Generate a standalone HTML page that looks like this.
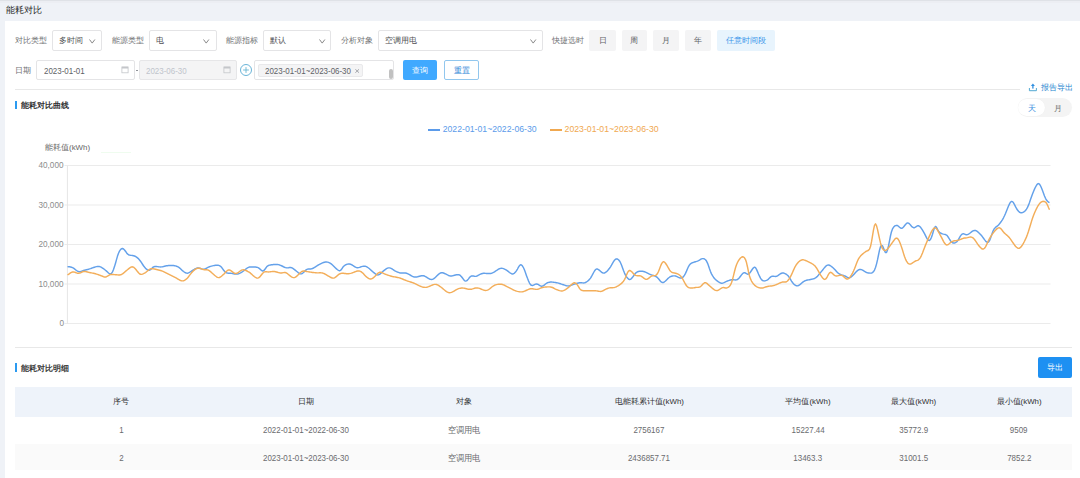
<!DOCTYPE html>
<html><head><meta charset="utf-8"><style>
html,body{margin:0;padding:0;}
body{width:1080px;height:478px;overflow:hidden;position:relative;background:#eff2f7;font-family:"Liberation Sans",sans-serif;}
.t{position:absolute;white-space:nowrap;font-size:7.9px;line-height:10px;}
.c{width:200px;text-align:center;}
.r{width:100px;text-align:right;}
</style></head><body>
<div style="position:absolute;left:0;top:0;width:1080px;height:1px;background:#dfe2e7;"></div><div style="position:absolute;left:0;top:1px;width:1080px;height:2px;background:#eceef3;"></div>
<div class="t" style="left:6.3px;top:4.5px;font-size:9px;color:#222;font-weight:500;">能耗对比</div>
<div style="position:absolute;left:5.2px;top:20.7px;width:1074.8px;height:458px;background:#fff;"></div>
<div class="t" style="left:15px;top:36px;color:#707174;">对比类型</div>
<div style="position:absolute;left:52px;top:30.3px;width:50px;height:20.3px;box-sizing:border-box;border:1px solid #e4e4e6;border-radius:2px;background:#fff;"></div>
<div class="t" style="left:59px;top:36px;color:#4e4f52;">多时间</div>
<svg style="position:absolute;left:89.0px;top:38.5px" width="7" height="5" viewBox="0 0 7 5"><path d="M0.5,0.5 L3.2,4.1 L5.9,0.5" fill="none" stroke="#888888" stroke-width="1"/></svg>
<div class="t" style="left:111.7px;top:36px;color:#707174;">能源类型</div>
<div style="position:absolute;left:148.6px;top:30.3px;width:68px;height:20.3px;box-sizing:border-box;border:1px solid #e4e4e6;border-radius:2px;background:#fff;"></div>
<div class="t" style="left:155.6px;top:36px;color:#4e4f52;">电</div>
<svg style="position:absolute;left:203.0px;top:38.5px" width="7" height="5" viewBox="0 0 7 5"><path d="M0.5,0.5 L3.2,4.1 L5.9,0.5" fill="none" stroke="#888888" stroke-width="1"/></svg>
<div class="t" style="left:225.9px;top:36px;color:#707174;">能源指标</div>
<div style="position:absolute;left:263.3px;top:30.3px;width:68px;height:20.3px;box-sizing:border-box;border:1px solid #e4e4e6;border-radius:2px;background:#fff;"></div>
<div class="t" style="left:270.3px;top:36px;color:#4e4f52;">默认</div>
<svg style="position:absolute;left:318.5px;top:38.5px" width="7" height="5" viewBox="0 0 7 5"><path d="M0.5,0.5 L3.2,4.1 L5.9,0.5" fill="none" stroke="#888888" stroke-width="1"/></svg>
<div class="t" style="left:340.7px;top:36px;color:#707174;">分析对象</div>
<div style="position:absolute;left:378.4px;top:30.3px;width:165px;height:20.3px;box-sizing:border-box;border:1px solid #e4e4e6;border-radius:2px;background:#fff;"></div>
<div class="t" style="left:385.4px;top:36px;color:#4e4f52;">空调用电</div>
<svg style="position:absolute;left:529.5px;top:38.5px" width="7" height="5" viewBox="0 0 7 5"><path d="M0.5,0.5 L3.2,4.1 L5.9,0.5" fill="none" stroke="#888888" stroke-width="1"/></svg>
<div class="t" style="left:551.7px;top:36px;color:#707174;">快捷选时</div>
<div style="position:absolute;left:589.4px;top:30px;width:26.7px;height:20.5px;background:#f4f4f5;border-radius:2px;"></div>
<div class="t c" style="left:502.75px;top:36px;color:#606266;">日</div>
<div style="position:absolute;left:621.7px;top:30px;width:25.5px;height:20.5px;background:#f4f4f5;border-radius:2px;"></div>
<div class="t c" style="left:534.45px;top:36px;color:#606266;">周</div>
<div style="position:absolute;left:652.8px;top:30px;width:26.6px;height:20.5px;background:#f4f4f5;border-radius:2px;"></div>
<div class="t c" style="left:566.0999999999999px;top:36px;color:#606266;">月</div>
<div style="position:absolute;left:685px;top:30px;width:26.2px;height:20.5px;background:#f4f4f5;border-radius:2px;"></div>
<div class="t c" style="left:598.1px;top:36px;color:#606266;">年</div>
<div style="position:absolute;left:716.5px;top:30px;width:58px;height:20.5px;background:#e8f4fd;border-radius:2px;"></div>
<div class="t c" style="left:645.5px;top:36px;color:#3a94ea;">任意时间段</div>
<div class="t" style="left:15.4px;top:65.6px;color:#707174;">日期</div>
<div style="position:absolute;left:36.3px;top:59.8px;width:98.7px;height:20.2px;box-sizing:border-box;border:1px solid #e4e4e6;border-radius:2px;background:#fff;"></div>
<div class="t" style="left:43.6px;top:65.5px;color:#606266;"><span style="display:inline-block;font-size:8.7px;transform:scaleX(0.915);transform-origin:left center;">2023-01-01</span></div>
<svg style="position:absolute;left:120.5px;top:65.8px" width="8" height="8" viewBox="0 0 8 8"><rect x="0.9" y="0.9" width="6.2" height="5.9" fill="none" stroke="#c4c6ca" stroke-width="0.8"/><rect x="0.9" y="0.9" width="6.2" height="1.6" fill="#c4c6ca"/></svg>
<div style="position:absolute;left:135.8px;top:70px;width:2px;height:0.8px;background:#909399;"></div>
<div style="position:absolute;left:138.8px;top:59.8px;width:98.2px;height:19.8px;box-sizing:border-box;border:1px solid #e6e6e8;border-radius:2px;background:#f4f4f5;"></div>
<div class="t" style="left:145.6px;top:65.5px;color:#c0c4cc;"><span style="display:inline-block;font-size:8.7px;transform:scaleX(0.915);transform-origin:left center;">2023-06-30</span></div>
<svg style="position:absolute;left:222.5px;top:65.8px" width="8" height="8" viewBox="0 0 8 8"><rect x="0.9" y="0.9" width="6.2" height="5.9" fill="none" stroke="#c4c6ca" stroke-width="0.8"/><rect x="0.9" y="0.9" width="6.2" height="1.6" fill="#c4c6ca"/></svg>
<svg style="position:absolute;left:239px;top:62.9px" width="14" height="14" viewBox="0 0 14 14"><circle cx="7" cy="7" r="5.5" fill="none" stroke="#62b0d6" stroke-width="0.95"/><line x1="4.1" y1="7" x2="9.9" y2="7" stroke="#6ab5d2" stroke-width="0.9"/><line x1="7" y1="4.1" x2="7" y2="9.9" stroke="#6ab5d2" stroke-width="0.9"/></svg>
<div style="position:absolute;left:254.4px;top:60.3px;width:139.2px;height:19.4px;box-sizing:border-box;border:1px solid #e4e4e6;border-radius:2px;background:#fff;"></div>
<div style="position:absolute;left:258.3px;top:64.4px;width:105px;height:12.5px;box-sizing:border-box;border:1px solid #e9e9eb;border-radius:2px;background:#f4f4f5;"></div>
<div class="t" style="left:264.6px;top:65.5px;color:#606266;"><span style="display:inline-block;font-size:8.7px;transform:scaleX(0.915);transform-origin:left center;">2023-01-01~2023-06-30</span></div>
<svg style="position:absolute;left:354.5px;top:69.2px" width="4.4" height="4" viewBox="0 0 4.4 4"><path d="M0.3,0.2 L4.1,3.8 M4.1,0.2 L0.3,3.8" stroke="#909399" stroke-width="0.8"/></svg>
<div style="position:absolute;left:389px;top:69px;width:4px;height:10px;background:#c1c1c1;border-radius:2px;"></div>
<div style="position:absolute;left:402.5px;top:59.6px;width:34.3px;height:20.6px;background:#40a9ff;border-radius:2px;"></div>
<div class="t c" style="left:319.65px;top:66px;color:#fff;font-weight:500;">查询</div>
<div style="position:absolute;left:444.2px;top:59.6px;width:34.7px;height:20.6px;box-sizing:border-box;border:1px solid #92c7ee;border-radius:2px;background:#fff;"></div>
<div class="t c" style="left:361.55px;top:66px;color:#2a82d6;font-weight:500;">重置</div>
<div style="position:absolute;left:15px;top:89px;width:1005px;height:1px;background:#e8e8e8;"></div>
<div style="position:absolute;left:15px;top:100.8px;width:2px;height:8.6px;background:#2b9af0;"></div>
<div class="t" style="left:21.3px;top:101px;font-weight:bold;color:#303133;">能耗对比曲线</div>
<svg style="position:absolute;left:1028px;top:83px" width="10" height="9" viewBox="0 0 10 9"><path d="M1.4,5.0 V7.7 H8.4 V5.0" fill="none" stroke="#4aa4d0" stroke-width="0.95"/><path d="M2.9,2.9 L4.9,0.6 L6.9,2.9 Z" fill="#2f8fe0"/><rect x="4.25" y="2.6" width="1.3" height="3.0" fill="#2f8fe0"/></svg>
<div class="t" style="left:1040.6px;top:83px;color:#2585cf;">报告导出</div>
<div style="position:absolute;left:1017.8px;top:98px;width:54px;height:18.7px;background:#f4f4f4;border-radius:9.5px;"></div>
<div style="position:absolute;left:1018.2px;top:99.3px;width:27px;height:16.7px;background:#fff;border-radius:8.5px;box-shadow:0 0 1px rgba(0,0,0,0.05);"></div>
<div class="t" style="left:1027.7px;top:104px;color:#3a8fe0;">天</div>
<div class="t" style="left:1054px;top:104px;color:#707070;">月</div>
<div style="position:absolute;left:428px;top:129.2px;width:12px;height:1.8px;background:#5b9bea;"></div>
<div class="t" style="left:442.7px;top:123.5px;color:#5b9bea;font-size:8.7px;">2022-01-01~2022-06-30</div>
<div style="position:absolute;left:550.4px;top:129.2px;width:12px;height:1.8px;background:#f0a850;"></div>
<div class="t" style="left:564.6px;top:123.5px;color:#f0a850;font-size:8.7px;">2023-01-01~2023-06-30</div>
<div style="position:absolute;left:100.6px;top:152px;width:30.4px;height:1px;background:#effcef;"></div>
<div class="t" style="left:45px;top:142.5px;color:#666;font-size:7.9px;">能耗值(kWh)</div>
<svg style="position:absolute;left:0;top:0" width="1080" height="478" viewBox="0 0 1080 478"><line x1="64.5" y1="165.5" x2="1050.5" y2="165.5" stroke="#ebebeb" stroke-width="1"/><line x1="64.5" y1="205.0" x2="1050.5" y2="205.0" stroke="#ebebeb" stroke-width="1"/><line x1="64.5" y1="244.5" x2="1050.5" y2="244.5" stroke="#ebebeb" stroke-width="1"/><line x1="64.5" y1="284.0" x2="1050.5" y2="284.0" stroke="#ebebeb" stroke-width="1"/><line x1="64.5" y1="323.5" x2="1050.5" y2="323.5" stroke="#ebebeb" stroke-width="1"/><line x1="67.4" y1="165.5" x2="67.4" y2="324" stroke="#e6e6e6" stroke-width="1"/><path d="M67.5,266.61 L68.5,266.70 L69.5,266.82 L70.5,266.98 L71.5,267.21 L72.5,267.56 L73.5,268.10 L74.5,268.83 L75.5,269.68 L76.5,270.52 L77.5,271.19 L78.5,271.59 L79.5,271.68 L80.5,271.52 L81.5,271.21 L82.5,270.85 L83.5,270.51 L84.5,270.22 L85.5,269.97 L86.5,269.73 L87.5,269.48 L88.5,269.22 L89.5,268.92 L90.5,268.60 L91.5,268.25 L92.5,267.89 L93.5,267.55 L94.5,267.22 L95.5,266.90 L96.5,266.60 L97.5,266.41 L98.5,266.38 L99.5,266.57 L100.5,266.94 L101.5,267.46 L102.5,268.07 L103.5,268.73 L104.5,269.45 L105.5,270.24 L106.5,271.11 L107.5,272.06 L108.5,273.03 L109.5,273.79 L110.5,273.98 L111.5,273.36 L112.5,271.88 L113.5,269.58 L114.5,266.60 L115.5,263.18 L116.5,259.58 L117.5,256.11 L118.5,253.21 L119.5,251.09 L120.5,249.64 L121.5,248.76 L122.5,248.52 L123.5,248.97 L124.5,249.95 L125.5,251.27 L126.5,252.70 L127.5,253.94 L128.5,254.74 L129.5,255.13 L130.5,255.27 L131.5,255.37 L132.5,255.52 L133.5,255.74 L134.5,256.04 L135.5,256.47 L136.5,257.07 L137.5,257.87 L138.5,258.84 L139.5,259.96 L140.5,261.24 L141.5,262.70 L142.5,264.25 L143.5,265.73 L144.5,267.04 L145.5,268.17 L146.5,269.15 L147.5,269.90 L148.5,270.31 L149.5,270.24 L150.5,269.63 L151.5,268.66 L152.5,267.67 L153.5,266.95 L154.5,266.57 L155.5,266.46 L156.5,266.52 L157.5,266.64 L158.5,266.78 L159.5,266.89 L160.5,266.93 L161.5,266.87 L162.5,266.72 L163.5,266.51 L164.5,266.27 L165.5,266.03 L166.5,265.82 L167.5,265.67 L168.5,265.55 L169.5,265.48 L170.5,265.43 L171.5,265.42 L172.5,265.44 L173.5,265.51 L174.5,265.66 L175.5,265.89 L176.5,266.22 L177.5,266.66 L178.5,267.22 L179.5,267.91 L180.5,268.76 L181.5,269.72 L182.5,270.67 L183.5,271.51 L184.5,272.22 L185.5,272.79 L186.5,273.13 L187.5,273.18 L188.5,272.91 L189.5,272.39 L190.5,271.75 L191.5,271.10 L192.5,270.47 L193.5,269.86 L194.5,269.26 L195.5,268.72 L196.5,268.30 L197.5,268.07 L198.5,268.06 L199.5,268.25 L200.5,268.55 L201.5,268.87 L202.5,269.11 L203.5,269.17 L204.5,269.03 L205.5,268.69 L206.5,268.22 L207.5,267.70 L208.5,267.19 L209.5,266.75 L210.5,266.40 L211.5,266.11 L212.5,265.86 L213.5,265.65 L214.5,265.46 L215.5,265.33 L216.5,265.24 L217.5,265.23 L218.5,265.33 L219.5,265.65 L220.5,266.28 L221.5,267.28 L222.5,268.59 L223.5,270.01 L224.5,271.27 L225.5,272.19 L226.5,272.75 L227.5,273.05 L228.5,273.18 L229.5,273.25 L230.5,273.30 L231.5,273.39 L232.5,273.56 L233.5,273.77 L234.5,273.98 L235.5,274.12 L236.5,274.15 L237.5,274.03 L238.5,273.76 L239.5,273.37 L240.5,272.89 L241.5,272.33 L242.5,271.70 L243.5,270.99 L244.5,270.18 L245.5,269.33 L246.5,268.52 L247.5,267.85 L248.5,267.36 L249.5,267.07 L250.5,266.93 L251.5,266.90 L252.5,266.92 L253.5,266.96 L254.5,266.99 L255.5,267.05 L256.5,267.17 L257.5,267.42 L258.5,267.89 L259.5,268.64 L260.5,269.58 L261.5,270.48 L262.5,271.00 L263.5,270.84 L264.5,269.89 L265.5,268.46 L266.5,267.06 L267.5,266.06 L268.5,265.47 L269.5,265.13 L270.5,264.93 L271.5,264.79 L272.5,264.67 L273.5,264.56 L274.5,264.47 L275.5,264.41 L276.5,264.41 L277.5,264.48 L278.5,264.65 L279.5,264.93 L280.5,265.32 L281.5,265.77 L282.5,266.27 L283.5,266.77 L284.5,267.23 L285.5,267.61 L286.5,267.84 L287.5,267.87 L288.5,267.72 L289.5,267.52 L290.5,267.47 L291.5,267.70 L292.5,268.20 L293.5,268.89 L294.5,269.66 L295.5,270.44 L296.5,271.23 L297.5,272.06 L298.5,272.87 L299.5,273.53 L300.5,273.90 L301.5,273.85 L302.5,273.33 L303.5,272.44 L304.5,271.38 L305.5,270.36 L306.5,269.59 L307.5,269.15 L308.5,268.99 L309.5,268.97 L310.5,268.95 L311.5,268.81 L312.5,268.50 L313.5,268.02 L314.5,267.43 L315.5,266.79 L316.5,266.14 L317.5,265.50 L318.5,264.92 L319.5,264.38 L320.5,263.87 L321.5,263.37 L322.5,262.92 L323.5,262.52 L324.5,262.22 L325.5,262.04 L326.5,262.00 L327.5,262.12 L328.5,262.42 L329.5,262.87 L330.5,263.46 L331.5,264.16 L332.5,264.99 L333.5,265.93 L334.5,266.92 L335.5,267.92 L336.5,268.88 L337.5,269.75 L338.5,270.42 L339.5,270.72 L340.5,270.39 L341.5,269.30 L342.5,267.79 L343.5,266.44 L344.5,265.53 L345.5,264.92 L346.5,264.46 L347.5,264.14 L348.5,263.98 L349.5,264.00 L350.5,264.25 L351.5,264.69 L352.5,265.25 L353.5,265.86 L354.5,266.52 L355.5,267.17 L356.5,267.63 L357.5,267.77 L358.5,267.64 L359.5,267.36 L360.5,267.02 L361.5,266.67 L362.5,266.37 L363.5,266.17 L364.5,266.13 L365.5,266.30 L366.5,266.70 L367.5,267.28 L368.5,267.99 L369.5,268.81 L370.5,269.70 L371.5,270.62 L372.5,271.51 L373.5,272.36 L374.5,273.18 L375.5,273.95 L376.5,274.57 L377.5,274.91 L378.5,274.86 L379.5,274.41 L380.5,273.65 L381.5,272.73 L382.5,271.78 L383.5,270.90 L384.5,270.11 L385.5,269.36 L386.5,268.69 L387.5,268.16 L388.5,267.87 L389.5,267.85 L390.5,268.11 L391.5,268.60 L392.5,269.23 L393.5,269.90 L394.5,270.54 L395.5,271.10 L396.5,271.59 L397.5,272.02 L398.5,272.42 L399.5,272.74 L400.5,272.97 L401.5,273.07 L402.5,273.02 L403.5,272.91 L404.5,272.85 L405.5,272.93 L406.5,273.22 L407.5,273.65 L408.5,274.18 L409.5,274.72 L410.5,275.26 L411.5,275.81 L412.5,276.34 L413.5,276.77 L414.5,277.02 L415.5,277.08 L416.5,276.98 L417.5,276.79 L418.5,276.53 L419.5,276.26 L420.5,275.99 L421.5,275.76 L422.5,275.64 L423.5,275.73 L424.5,276.06 L425.5,276.56 L426.5,277.16 L427.5,277.82 L428.5,278.47 L429.5,279.02 L430.5,279.40 L431.5,279.54 L432.5,279.37 L433.5,278.90 L434.5,278.18 L435.5,277.29 L436.5,276.32 L437.5,275.32 L438.5,274.37 L439.5,273.55 L440.5,272.96 L441.5,272.68 L442.5,272.73 L443.5,273.04 L444.5,273.47 L445.5,273.93 L446.5,274.43 L447.5,274.96 L448.5,275.45 L449.5,275.80 L450.5,275.97 L451.5,275.97 L452.5,275.81 L453.5,275.57 L454.5,275.29 L455.5,275.01 L456.5,274.78 L457.5,274.64 L458.5,274.67 L459.5,274.96 L460.5,275.63 L461.5,276.70 L462.5,278.05 L463.5,279.44 L464.5,280.55 L465.5,281.09 L466.5,280.91 L467.5,280.09 L468.5,278.86 L469.5,277.56 L470.5,276.51 L471.5,275.94 L472.5,275.85 L473.5,276.07 L474.5,276.32 L475.5,276.38 L476.5,276.17 L477.5,275.75 L478.5,275.23 L479.5,274.68 L480.5,274.17 L481.5,273.76 L482.5,273.47 L483.5,273.33 L484.5,273.30 L485.5,273.35 L486.5,273.44 L487.5,273.53 L488.5,273.59 L489.5,273.59 L490.5,273.49 L491.5,273.27 L492.5,272.90 L493.5,272.40 L494.5,271.81 L495.5,271.15 L496.5,270.48 L497.5,269.81 L498.5,269.21 L499.5,268.72 L500.5,268.39 L501.5,268.26 L502.5,268.35 L503.5,268.64 L504.5,269.08 L505.5,269.61 L506.5,270.21 L507.5,270.91 L508.5,271.69 L509.5,272.47 L510.5,273.17 L511.5,273.71 L512.5,273.95 L513.5,273.76 L514.5,273.12 L515.5,272.06 L516.5,270.68 L517.5,269.02 L518.5,267.14 L519.5,265.53 L520.5,264.75 L521.5,264.97 L522.5,266.02 L523.5,267.74 L524.5,270.05 L525.5,272.80 L526.5,275.65 L527.5,278.35 L528.5,280.86 L529.5,283.03 L530.5,284.59 L531.5,285.39 L532.5,285.48 L533.5,285.10 L534.5,284.55 L535.5,284.10 L536.5,283.94 L537.5,284.17 L538.5,284.71 L539.5,285.36 L540.5,285.92 L541.5,286.20 L542.5,286.09 L543.5,285.60 L544.5,284.85 L545.5,284.02 L546.5,283.27 L547.5,282.70 L548.5,282.34 L549.5,282.16 L550.5,282.09 L551.5,282.09 L552.5,282.15 L553.5,282.24 L554.5,282.36 L555.5,282.51 L556.5,282.68 L557.5,282.89 L558.5,283.16 L559.5,283.47 L560.5,283.80 L561.5,284.15 L562.5,284.47 L563.5,284.79 L564.5,285.11 L565.5,285.43 L566.5,285.71 L567.5,285.89 L568.5,285.93 L569.5,285.81 L570.5,285.54 L571.5,285.18 L572.5,284.80 L573.5,284.43 L574.5,284.10 L575.5,283.78 L576.5,283.48 L577.5,283.20 L578.5,282.95 L579.5,282.76 L580.5,282.68 L581.5,282.75 L582.5,282.89 L583.5,282.97 L584.5,282.86 L585.5,282.51 L586.5,281.97 L587.5,281.27 L588.5,280.41 L589.5,279.36 L590.5,278.07 L591.5,276.49 L592.5,274.67 L593.5,272.76 L594.5,271.00 L595.5,269.65 L596.5,268.98 L597.5,269.06 L598.5,269.65 L599.5,270.42 L600.5,271.28 L601.5,272.14 L602.5,272.81 L603.5,273.12 L604.5,272.99 L605.5,272.47 L606.5,271.68 L607.5,270.69 L608.5,269.55 L609.5,268.28 L610.5,266.80 L611.5,265.13 L612.5,263.37 L613.5,261.67 L614.5,260.23 L615.5,259.25 L616.5,258.85 L617.5,259.04 L618.5,259.77 L619.5,260.98 L620.5,262.68 L621.5,264.97 L622.5,267.74 L623.5,270.58 L624.5,273.07 L625.5,275.08 L626.5,276.74 L627.5,278.10 L628.5,279.10 L629.5,279.58 L630.5,279.37 L631.5,278.52 L632.5,277.33 L633.5,275.97 L634.5,274.55 L635.5,273.28 L636.5,272.36 L637.5,271.80 L638.5,271.48 L639.5,271.31 L640.5,271.25 L641.5,271.26 L642.5,271.34 L643.5,271.50 L644.5,271.76 L645.5,272.12 L646.5,272.55 L647.5,273.04 L648.5,273.55 L649.5,274.04 L650.5,274.48 L651.5,274.87 L652.5,275.21 L653.5,275.55 L654.5,275.90 L655.5,276.32 L656.5,276.87 L657.5,277.64 L658.5,278.70 L659.5,279.98 L660.5,281.24 L661.5,282.16 L662.5,282.56 L663.5,282.41 L664.5,281.81 L665.5,280.94 L666.5,279.93 L667.5,278.90 L668.5,277.97 L669.5,277.22 L670.5,276.66 L671.5,276.25 L672.5,275.98 L673.5,275.85 L674.5,275.87 L675.5,276.05 L676.5,276.39 L677.5,276.85 L678.5,277.34 L679.5,277.78 L680.5,278.07 L681.5,278.05 L682.5,277.60 L683.5,276.62 L684.5,275.17 L685.5,273.34 L686.5,271.15 L687.5,268.73 L688.5,266.53 L689.5,264.91 L690.5,263.86 L691.5,263.18 L692.5,262.70 L693.5,262.32 L694.5,262.00 L695.5,261.71 L696.5,261.41 L697.5,261.06 L698.5,260.63 L699.5,260.08 L700.5,259.47 L701.5,258.93 L702.5,258.62 L703.5,258.64 L704.5,259.01 L705.5,259.77 L706.5,261.06 L707.5,263.06 L708.5,265.81 L709.5,268.85 L710.5,271.61 L711.5,273.87 L712.5,275.71 L713.5,277.21 L714.5,278.44 L715.5,279.47 L716.5,280.38 L717.5,281.18 L718.5,281.89 L719.5,282.49 L720.5,282.94 L721.5,283.18 L722.5,283.16 L723.5,282.89 L724.5,282.42 L725.5,281.90 L726.5,281.42 L727.5,281.01 L728.5,280.65 L729.5,280.32 L730.5,280.03 L731.5,279.81 L732.5,279.70 L733.5,279.74 L734.5,279.87 L735.5,279.97 L736.5,279.89 L737.5,279.48 L738.5,278.68 L739.5,277.55 L740.5,276.23 L741.5,274.88 L742.5,273.70 L743.5,272.90 L744.5,272.68 L745.5,273.05 L746.5,273.71 L747.5,274.18 L748.5,274.07 L749.5,273.29 L750.5,272.01 L751.5,270.51 L752.5,269.00 L753.5,267.78 L754.5,267.20 L755.5,267.70 L756.5,269.35 L757.5,271.66 L758.5,274.00 L759.5,276.19 L760.5,278.13 L761.5,279.62 L762.5,280.52 L763.5,280.89 L764.5,280.91 L765.5,280.69 L766.5,280.33 L767.5,279.81 L768.5,279.06 L769.5,278.09 L770.5,277.12 L771.5,276.42 L772.5,276.15 L773.5,276.22 L774.5,276.39 L775.5,276.47 L776.5,276.29 L777.5,275.84 L778.5,275.17 L779.5,274.44 L780.5,273.75 L781.5,273.24 L782.5,272.99 L783.5,273.03 L784.5,273.33 L785.5,273.82 L786.5,274.48 L787.5,275.31 L788.5,276.35 L789.5,277.71 L790.5,279.36 L791.5,281.04 L792.5,282.50 L793.5,283.69 L794.5,284.66 L795.5,285.39 L796.5,285.81 L797.5,285.87 L798.5,285.56 L799.5,284.94 L800.5,284.13 L801.5,283.24 L802.5,282.38 L803.5,281.62 L804.5,281.03 L805.5,280.61 L806.5,280.30 L807.5,280.07 L808.5,279.88 L809.5,279.69 L810.5,279.48 L811.5,279.26 L812.5,279.05 L813.5,278.80 L814.5,278.46 L815.5,277.91 L816.5,277.14 L817.5,276.16 L818.5,275.03 L819.5,273.82 L820.5,272.60 L821.5,271.39 L822.5,270.18 L823.5,268.92 L824.5,267.67 L825.5,266.54 L826.5,265.65 L827.5,265.12 L828.5,264.99 L829.5,265.24 L830.5,265.77 L831.5,266.49 L832.5,267.32 L833.5,268.21 L834.5,269.20 L835.5,270.32 L836.5,271.48 L837.5,272.53 L838.5,273.37 L839.5,274.00 L840.5,274.48 L841.5,274.86 L842.5,275.19 L843.5,275.50 L844.5,275.83 L845.5,276.25 L846.5,276.80 L847.5,277.37 L848.5,277.75 L849.5,277.76 L850.5,277.39 L851.5,276.70 L852.5,275.78 L853.5,274.74 L854.5,273.65 L855.5,272.57 L856.5,271.55 L857.5,270.66 L858.5,269.96 L859.5,269.52 L860.5,269.41 L861.5,269.61 L862.5,270.06 L863.5,270.68 L864.5,271.36 L865.5,271.98 L866.5,272.45 L867.5,272.76 L868.5,272.96 L869.5,273.09 L870.5,273.13 L871.5,272.99 L872.5,272.56 L873.5,271.66 L874.5,270.03 L875.5,267.51 L876.5,264.10 L877.5,259.90 L878.5,255.01 L879.5,250.18 L880.5,246.77 L881.5,245.39 L882.5,245.93 L883.5,247.98 L884.5,250.68 L885.5,252.61 L886.5,252.51 L887.5,250.06 L888.5,245.89 L889.5,240.81 L890.5,235.74 L891.5,231.67 L892.5,228.95 L893.5,227.27 L894.5,226.22 L895.5,225.59 L896.5,225.34 L897.5,225.56 L898.5,226.27 L899.5,227.23 L900.5,228.05 L901.5,228.36 L902.5,228.00 L903.5,227.05 L904.5,225.78 L905.5,224.48 L906.5,223.46 L907.5,222.97 L908.5,223.14 L909.5,223.88 L910.5,224.99 L911.5,226.18 L912.5,227.18 L913.5,227.72 L914.5,227.66 L915.5,227.11 L916.5,226.36 L917.5,225.80 L918.5,225.75 L919.5,226.28 L920.5,227.29 L921.5,228.63 L922.5,230.15 L923.5,231.81 L924.5,233.64 L925.5,235.64 L926.5,237.64 L927.5,239.34 L928.5,240.38 L929.5,240.42 L930.5,239.37 L931.5,237.29 L932.5,234.30 L933.5,230.72 L934.5,227.66 L935.5,226.40 L936.5,227.27 L937.5,229.29 L938.5,231.16 L939.5,232.34 L940.5,233.03 L941.5,233.50 L942.5,233.87 L943.5,234.16 L944.5,234.35 L945.5,234.55 L946.5,235.05 L947.5,236.07 L948.5,237.53 L949.5,239.19 L950.5,240.74 L951.5,241.96 L952.5,242.72 L953.5,243.04 L954.5,243.01 L955.5,242.66 L956.5,241.99 L957.5,240.91 L958.5,239.39 L959.5,237.61 L960.5,235.89 L961.5,234.57 L962.5,233.88 L963.5,233.81 L964.5,234.12 L965.5,234.51 L966.5,234.72 L967.5,234.61 L968.5,234.16 L969.5,233.49 L970.5,232.71 L971.5,231.92 L972.5,231.21 L973.5,230.69 L974.5,230.45 L975.5,230.54 L976.5,230.94 L977.5,231.61 L978.5,232.48 L979.5,233.44 L980.5,234.46 L981.5,235.57 L982.5,236.83 L983.5,238.23 L984.5,239.64 L985.5,240.93 L986.5,241.92 L987.5,242.39 L988.5,242.05 L989.5,240.67 L990.5,238.30 L991.5,235.33 L992.5,232.40 L993.5,230.06 L994.5,228.47 L995.5,227.42 L996.5,226.63 L997.5,225.86 L998.5,224.93 L999.5,223.81 L1000.5,222.54 L1001.5,221.13 L1002.5,219.56 L1003.5,217.78 L1004.5,215.75 L1005.5,213.44 L1006.5,210.93 L1007.5,208.40 L1008.5,205.98 L1009.5,203.85 L1010.5,202.24 L1011.5,201.43 L1012.5,201.62 L1013.5,202.79 L1014.5,204.62 L1015.5,206.67 L1016.5,208.51 L1017.5,210.04 L1018.5,211.31 L1019.5,212.22 L1020.5,212.67 L1021.5,212.72 L1022.5,212.51 L1023.5,212.09 L1024.5,211.43 L1025.5,210.48 L1026.5,209.18 L1027.5,207.41 L1028.5,205.15 L1029.5,202.49 L1030.5,199.61 L1031.5,196.71 L1032.5,193.97 L1033.5,191.46 L1034.5,189.16 L1035.5,187.05 L1036.5,185.25 L1037.5,183.99 L1038.5,183.56 L1039.5,184.17 L1040.5,185.77 L1041.5,188.03 L1042.5,190.57 L1043.5,193.24 L1044.5,195.94 L1045.5,198.30 L1046.5,200.04 L1047.5,201.25 L1048.5,202.12 L1049.5,202.71" fill="none" stroke="#64a1ea" stroke-width="1.45" stroke-linejoin="round"/><path d="M67.5,274.86 L68.5,274.33 L69.5,273.63 L70.5,272.95 L71.5,272.37 L72.5,271.99 L73.5,271.90 L74.5,272.09 L75.5,272.48 L76.5,272.92 L77.5,273.24 L78.5,273.33 L79.5,273.14 L80.5,272.74 L81.5,272.26 L82.5,271.80 L83.5,271.50 L84.5,271.40 L85.5,271.48 L86.5,271.68 L87.5,271.94 L88.5,272.21 L89.5,272.45 L90.5,272.67 L91.5,272.88 L92.5,273.09 L93.5,273.32 L94.5,273.56 L95.5,273.82 L96.5,274.11 L97.5,274.42 L98.5,274.75 L99.5,275.09 L100.5,275.45 L101.5,275.84 L102.5,276.27 L103.5,276.68 L104.5,276.97 L105.5,277.00 L106.5,276.72 L107.5,276.17 L108.5,275.51 L109.5,274.93 L110.5,274.55 L111.5,274.40 L112.5,274.40 L113.5,274.49 L114.5,274.60 L115.5,274.70 L116.5,274.79 L117.5,274.89 L118.5,274.98 L119.5,274.98 L120.5,274.84 L121.5,274.48 L122.5,273.91 L123.5,273.15 L124.5,272.28 L125.5,271.40 L126.5,270.54 L127.5,269.72 L128.5,268.90 L129.5,268.11 L130.5,267.42 L131.5,266.94 L132.5,266.82 L133.5,267.18 L134.5,267.98 L135.5,269.05 L136.5,270.27 L137.5,271.58 L138.5,272.81 L139.5,273.75 L140.5,274.27 L141.5,274.37 L142.5,274.13 L143.5,273.69 L144.5,273.14 L145.5,272.52 L146.5,271.81 L147.5,270.99 L148.5,270.14 L149.5,269.40 L150.5,268.90 L151.5,268.68 L152.5,268.69 L153.5,268.84 L154.5,269.06 L155.5,269.28 L156.5,269.50 L157.5,269.71 L158.5,269.94 L159.5,270.20 L160.5,270.48 L161.5,270.81 L162.5,271.18 L163.5,271.60 L164.5,272.07 L165.5,272.58 L166.5,273.10 L167.5,273.64 L168.5,274.16 L169.5,274.67 L170.5,275.17 L171.5,275.67 L172.5,276.17 L173.5,276.67 L174.5,277.17 L175.5,277.69 L176.5,278.23 L177.5,278.81 L178.5,279.41 L179.5,279.99 L180.5,280.47 L181.5,280.78 L182.5,280.88 L183.5,280.74 L184.5,280.35 L185.5,279.74 L186.5,278.93 L187.5,277.93 L188.5,276.73 L189.5,275.42 L190.5,274.09 L191.5,272.86 L192.5,271.75 L193.5,270.77 L194.5,269.88 L195.5,269.14 L196.5,268.57 L197.5,268.23 L198.5,268.14 L199.5,268.27 L200.5,268.55 L201.5,268.91 L202.5,269.27 L203.5,269.55 L204.5,269.70 L205.5,269.74 L206.5,269.76 L207.5,269.89 L208.5,270.23 L209.5,270.83 L210.5,271.61 L211.5,272.50 L212.5,273.43 L213.5,274.32 L214.5,275.18 L215.5,276.02 L216.5,276.79 L217.5,277.37 L218.5,277.62 L219.5,277.48 L220.5,276.97 L221.5,276.21 L222.5,275.33 L223.5,274.40 L224.5,273.39 L225.5,272.30 L226.5,271.27 L227.5,270.46 L228.5,270.01 L229.5,270.00 L230.5,270.41 L231.5,271.09 L232.5,271.90 L233.5,272.67 L234.5,273.25 L235.5,273.53 L236.5,273.44 L237.5,272.99 L238.5,272.30 L239.5,271.51 L240.5,270.76 L241.5,270.17 L242.5,269.86 L243.5,269.82 L244.5,269.99 L245.5,270.32 L246.5,270.75 L247.5,271.26 L248.5,271.82 L249.5,272.45 L250.5,273.20 L251.5,274.09 L252.5,275.05 L253.5,275.94 L254.5,276.73 L255.5,277.43 L256.5,277.96 L257.5,278.16 L258.5,277.91 L259.5,277.17 L260.5,276.04 L261.5,274.73 L262.5,273.47 L263.5,272.49 L264.5,271.91 L265.5,271.70 L266.5,271.75 L267.5,271.87 L268.5,271.93 L269.5,271.88 L270.5,271.75 L271.5,271.61 L272.5,271.51 L273.5,271.49 L274.5,271.58 L275.5,271.76 L276.5,272.01 L277.5,272.29 L278.5,272.58 L279.5,272.82 L280.5,272.98 L281.5,272.99 L282.5,272.84 L283.5,272.62 L284.5,272.47 L285.5,272.58 L286.5,273.01 L287.5,273.71 L288.5,274.54 L289.5,275.38 L290.5,276.14 L291.5,276.80 L292.5,277.34 L293.5,277.65 L294.5,277.61 L295.5,277.16 L296.5,276.38 L297.5,275.44 L298.5,274.46 L299.5,273.45 L300.5,272.49 L301.5,271.71 L302.5,271.24 L303.5,271.06 L304.5,271.09 L305.5,271.23 L306.5,271.42 L307.5,271.64 L308.5,271.84 L309.5,272.00 L310.5,272.15 L311.5,272.28 L312.5,272.41 L313.5,272.54 L314.5,272.65 L315.5,272.75 L316.5,272.82 L317.5,272.85 L318.5,272.85 L319.5,272.84 L320.5,272.84 L321.5,272.90 L322.5,273.05 L323.5,273.33 L324.5,273.76 L325.5,274.31 L326.5,274.92 L327.5,275.53 L328.5,276.12 L329.5,276.69 L330.5,277.26 L331.5,277.77 L332.5,278.09 L333.5,278.14 L334.5,277.85 L335.5,277.23 L336.5,276.39 L337.5,275.48 L338.5,274.64 L339.5,273.97 L340.5,273.55 L341.5,273.34 L342.5,273.29 L343.5,273.34 L344.5,273.45 L345.5,273.57 L346.5,273.68 L347.5,273.73 L348.5,273.70 L349.5,273.59 L350.5,273.41 L351.5,273.15 L352.5,272.81 L353.5,272.42 L354.5,272.00 L355.5,271.61 L356.5,271.29 L357.5,271.07 L358.5,270.99 L359.5,271.09 L360.5,271.42 L361.5,272.00 L362.5,272.83 L363.5,273.82 L364.5,274.89 L365.5,275.93 L366.5,276.89 L367.5,277.71 L368.5,278.38 L369.5,278.86 L370.5,279.04 L371.5,278.88 L372.5,278.39 L373.5,277.67 L374.5,276.81 L375.5,275.83 L376.5,274.74 L377.5,273.66 L378.5,272.79 L379.5,272.28 L380.5,272.17 L381.5,272.39 L382.5,272.81 L383.5,273.32 L384.5,273.84 L385.5,274.29 L386.5,274.68 L387.5,275.02 L388.5,275.34 L389.5,275.64 L390.5,275.93 L391.5,276.20 L392.5,276.46 L393.5,276.68 L394.5,276.88 L395.5,277.05 L396.5,277.23 L397.5,277.42 L398.5,277.64 L399.5,277.92 L400.5,278.25 L401.5,278.63 L402.5,279.04 L403.5,279.47 L404.5,279.89 L405.5,280.29 L406.5,280.67 L407.5,281.02 L408.5,281.34 L409.5,281.66 L410.5,281.98 L411.5,282.30 L412.5,282.63 L413.5,282.99 L414.5,283.39 L415.5,283.84 L416.5,284.36 L417.5,284.90 L418.5,285.42 L419.5,285.87 L420.5,286.26 L421.5,286.63 L422.5,286.95 L423.5,287.19 L424.5,287.34 L425.5,287.36 L426.5,287.25 L427.5,287.00 L428.5,286.65 L429.5,286.24 L430.5,285.80 L431.5,285.36 L432.5,284.96 L433.5,284.62 L434.5,284.40 L435.5,284.35 L436.5,284.51 L437.5,284.89 L438.5,285.45 L439.5,286.10 L440.5,286.78 L441.5,287.52 L442.5,288.33 L443.5,289.18 L444.5,290.03 L445.5,290.83 L446.5,291.54 L447.5,292.12 L448.5,292.53 L449.5,292.70 L450.5,292.64 L451.5,292.38 L452.5,291.95 L453.5,291.42 L454.5,290.81 L455.5,290.19 L456.5,289.59 L457.5,289.07 L458.5,288.67 L459.5,288.37 L460.5,288.17 L461.5,288.07 L462.5,288.05 L463.5,288.10 L464.5,288.23 L465.5,288.44 L466.5,288.70 L467.5,288.96 L468.5,289.18 L469.5,289.31 L470.5,289.32 L471.5,289.18 L472.5,288.91 L473.5,288.56 L474.5,288.23 L475.5,287.98 L476.5,287.87 L477.5,287.92 L478.5,288.11 L479.5,288.42 L480.5,288.80 L481.5,289.21 L482.5,289.61 L483.5,289.97 L484.5,290.25 L485.5,290.41 L486.5,290.40 L487.5,290.16 L488.5,289.69 L489.5,289.00 L490.5,288.18 L491.5,287.31 L492.5,286.48 L493.5,285.79 L494.5,285.27 L495.5,284.89 L496.5,284.60 L497.5,284.39 L498.5,284.25 L499.5,284.18 L500.5,284.19 L501.5,284.29 L502.5,284.50 L503.5,284.83 L504.5,285.27 L505.5,285.78 L506.5,286.33 L507.5,286.88 L508.5,287.40 L509.5,287.91 L510.5,288.43 L511.5,288.96 L512.5,289.48 L513.5,289.96 L514.5,290.39 L515.5,290.77 L516.5,291.10 L517.5,291.39 L518.5,291.64 L519.5,291.81 L520.5,291.90 L521.5,291.89 L522.5,291.76 L523.5,291.51 L524.5,291.15 L525.5,290.72 L526.5,290.26 L527.5,289.80 L528.5,289.38 L529.5,289.03 L530.5,288.81 L531.5,288.74 L532.5,288.79 L533.5,288.93 L534.5,289.12 L535.5,289.28 L536.5,289.36 L537.5,289.28 L538.5,289.02 L539.5,288.63 L540.5,288.18 L541.5,287.77 L542.5,287.47 L543.5,287.27 L544.5,287.12 L545.5,287.01 L546.5,286.93 L547.5,286.87 L548.5,286.86 L549.5,286.89 L550.5,286.99 L551.5,287.19 L552.5,287.53 L553.5,288.00 L554.5,288.53 L555.5,289.04 L556.5,289.49 L557.5,289.90 L558.5,290.30 L559.5,290.64 L560.5,290.89 L561.5,291.00 L562.5,290.92 L563.5,290.64 L564.5,290.17 L565.5,289.57 L566.5,288.88 L567.5,288.14 L568.5,287.36 L569.5,286.50 L570.5,285.56 L571.5,284.59 L572.5,283.70 L573.5,283.05 L574.5,282.81 L575.5,283.08 L576.5,283.87 L577.5,285.12 L578.5,286.74 L579.5,288.38 L580.5,289.59 L581.5,290.27 L582.5,290.59 L583.5,290.73 L584.5,290.77 L585.5,290.77 L586.5,290.77 L587.5,290.78 L588.5,290.80 L589.5,290.81 L590.5,290.80 L591.5,290.79 L592.5,290.77 L593.5,290.76 L594.5,290.76 L595.5,290.80 L596.5,290.89 L597.5,291.03 L598.5,291.20 L599.5,291.35 L600.5,291.41 L601.5,291.29 L602.5,290.97 L603.5,290.49 L604.5,289.95 L605.5,289.43 L606.5,288.95 L607.5,288.51 L608.5,288.13 L609.5,287.87 L610.5,287.73 L611.5,287.68 L612.5,287.66 L613.5,287.60 L614.5,287.43 L615.5,287.13 L616.5,286.71 L617.5,286.19 L618.5,285.59 L619.5,284.91 L620.5,284.17 L621.5,283.35 L622.5,282.40 L623.5,281.21 L624.5,279.60 L625.5,277.50 L626.5,275.06 L627.5,272.74 L628.5,271.10 L629.5,270.48 L630.5,270.77 L631.5,271.58 L632.5,272.61 L633.5,273.72 L634.5,274.71 L635.5,275.36 L636.5,275.64 L637.5,275.68 L638.5,275.65 L639.5,275.67 L640.5,275.87 L641.5,276.33 L642.5,277.05 L643.5,277.90 L644.5,278.68 L645.5,279.22 L646.5,279.35 L647.5,279.05 L648.5,278.40 L649.5,277.57 L650.5,276.75 L651.5,276.11 L652.5,275.76 L653.5,275.65 L654.5,275.62 L655.5,275.42 L656.5,274.78 L657.5,273.50 L658.5,271.49 L659.5,268.97 L660.5,266.29 L661.5,263.90 L662.5,262.27 L663.5,261.68 L664.5,262.11 L665.5,263.25 L666.5,264.73 L667.5,266.41 L668.5,268.23 L669.5,269.93 L670.5,271.22 L671.5,272.03 L672.5,272.51 L673.5,272.81 L674.5,273.02 L675.5,273.21 L676.5,273.46 L677.5,273.82 L678.5,274.32 L679.5,275.00 L680.5,275.92 L681.5,277.15 L682.5,278.71 L683.5,280.52 L684.5,282.44 L685.5,284.24 L686.5,285.75 L687.5,286.83 L688.5,287.50 L689.5,287.85 L690.5,288.00 L691.5,288.04 L692.5,288.02 L693.5,287.90 L694.5,287.67 L695.5,287.48 L696.5,287.40 L697.5,287.39 L698.5,287.33 L699.5,287.10 L700.5,286.56 L701.5,285.68 L702.5,284.57 L703.5,283.52 L704.5,282.83 L705.5,282.70 L706.5,283.12 L707.5,283.93 L708.5,284.87 L709.5,285.78 L710.5,286.64 L711.5,287.49 L712.5,288.34 L713.5,289.14 L714.5,289.83 L715.5,290.34 L716.5,290.59 L717.5,290.50 L718.5,290.11 L719.5,289.49 L720.5,288.78 L721.5,288.10 L722.5,287.65 L723.5,287.53 L724.5,287.71 L725.5,287.94 L726.5,287.95 L727.5,287.67 L728.5,287.12 L729.5,286.27 L730.5,284.90 L731.5,282.75 L732.5,279.61 L733.5,275.66 L734.5,271.49 L735.5,267.74 L736.5,264.77 L737.5,262.50 L738.5,260.70 L739.5,259.23 L740.5,258.05 L741.5,257.20 L742.5,256.77 L743.5,256.93 L744.5,257.82 L745.5,259.60 L746.5,262.58 L747.5,266.98 L748.5,271.95 L749.5,276.04 L750.5,278.92 L751.5,281.03 L752.5,282.68 L753.5,284.01 L754.5,285.07 L755.5,285.91 L756.5,286.56 L757.5,287.08 L758.5,287.48 L759.5,287.77 L760.5,287.96 L761.5,288.01 L762.5,287.92 L763.5,287.70 L764.5,287.39 L765.5,287.06 L766.5,286.74 L767.5,286.48 L768.5,286.29 L769.5,286.15 L770.5,286.03 L771.5,285.91 L772.5,285.75 L773.5,285.54 L774.5,285.26 L775.5,284.92 L776.5,284.52 L777.5,284.08 L778.5,283.63 L779.5,283.17 L780.5,282.73 L781.5,282.34 L782.5,282.05 L783.5,281.93 L784.5,281.98 L785.5,282.02 L786.5,281.73 L787.5,280.99 L788.5,279.83 L789.5,278.35 L790.5,276.62 L791.5,274.65 L792.5,272.44 L793.5,270.13 L794.5,267.93 L795.5,266.02 L796.5,264.45 L797.5,263.15 L798.5,262.07 L799.5,261.19 L800.5,260.50 L801.5,260.04 L802.5,259.81 L803.5,259.84 L804.5,260.08 L805.5,260.48 L806.5,260.94 L807.5,261.43 L808.5,261.90 L809.5,262.37 L810.5,262.87 L811.5,263.40 L812.5,264.00 L813.5,264.69 L814.5,265.52 L815.5,266.59 L816.5,267.97 L817.5,269.64 L818.5,271.46 L819.5,273.23 L820.5,274.85 L821.5,276.38 L822.5,277.78 L823.5,278.88 L824.5,279.42 L825.5,279.17 L826.5,278.04 L827.5,276.28 L828.5,274.39 L829.5,272.94 L830.5,272.32 L831.5,272.59 L832.5,273.47 L833.5,274.54 L834.5,275.41 L835.5,275.89 L836.5,275.99 L837.5,275.85 L838.5,275.62 L839.5,275.38 L840.5,275.24 L841.5,275.30 L842.5,275.68 L843.5,276.40 L844.5,277.35 L845.5,278.28 L846.5,278.93 L847.5,279.09 L848.5,278.68 L849.5,277.76 L850.5,276.44 L851.5,274.85 L852.5,273.05 L853.5,271.06 L854.5,268.78 L855.5,266.18 L856.5,263.48 L857.5,260.99 L858.5,258.94 L859.5,257.35 L860.5,256.09 L861.5,255.04 L862.5,254.12 L863.5,253.27 L864.5,252.47 L865.5,251.75 L866.5,251.19 L867.5,250.77 L868.5,250.26 L869.5,249.14 L870.5,246.60 L871.5,241.97 L872.5,235.85 L873.5,229.85 L874.5,225.40 L875.5,223.85 L876.5,225.57 L877.5,229.42 L878.5,233.99 L879.5,238.65 L880.5,242.96 L881.5,246.38 L882.5,248.64 L883.5,249.91 L884.5,250.44 L885.5,250.40 L886.5,249.89 L887.5,248.99 L888.5,247.82 L889.5,246.50 L890.5,245.13 L891.5,243.78 L892.5,242.40 L893.5,240.97 L894.5,239.59 L895.5,238.52 L896.5,238.08 L897.5,238.48 L898.5,239.73 L899.5,241.69 L900.5,244.12 L901.5,246.92 L902.5,250.09 L903.5,253.41 L904.5,256.50 L905.5,259.10 L906.5,261.17 L907.5,262.72 L908.5,263.70 L909.5,264.12 L910.5,264.05 L911.5,263.61 L912.5,262.96 L913.5,262.23 L914.5,261.54 L915.5,260.99 L916.5,260.63 L917.5,260.32 L918.5,259.81 L919.5,258.84 L920.5,257.33 L921.5,255.31 L922.5,252.92 L923.5,250.33 L924.5,247.69 L925.5,245.13 L926.5,242.71 L927.5,240.39 L928.5,238.11 L929.5,235.86 L930.5,233.68 L931.5,231.67 L932.5,229.95 L933.5,228.65 L934.5,227.94 L935.5,227.97 L936.5,228.75 L937.5,230.14 L938.5,231.90 L939.5,233.74 L940.5,235.56 L941.5,237.42 L942.5,239.40 L943.5,241.35 L944.5,243.06 L945.5,244.30 L946.5,244.91 L947.5,244.87 L948.5,244.31 L949.5,243.46 L950.5,242.57 L951.5,241.84 L952.5,241.35 L953.5,241.04 L954.5,240.83 L955.5,240.67 L956.5,240.52 L957.5,240.34 L958.5,240.11 L959.5,239.80 L960.5,239.42 L961.5,239.00 L962.5,238.58 L963.5,238.25 L964.5,238.05 L965.5,237.98 L966.5,237.87 L967.5,237.66 L968.5,237.38 L969.5,237.14 L970.5,237.02 L971.5,237.12 L972.5,237.55 L973.5,238.36 L974.5,239.52 L975.5,240.93 L976.5,242.44 L977.5,243.91 L978.5,245.25 L979.5,246.46 L980.5,247.58 L981.5,248.51 L982.5,249.06 L983.5,249.02 L984.5,248.27 L985.5,246.84 L986.5,244.89 L987.5,242.70 L988.5,240.52 L989.5,238.54 L990.5,236.83 L991.5,235.32 L992.5,233.91 L993.5,232.58 L994.5,231.33 L995.5,230.18 L996.5,229.17 L997.5,228.36 L998.5,227.86 L999.5,227.82 L1000.5,228.35 L1001.5,229.41 L1002.5,230.76 L1003.5,232.08 L1004.5,233.15 L1005.5,234.03 L1006.5,234.85 L1007.5,235.71 L1008.5,236.70 L1009.5,237.85 L1010.5,239.16 L1011.5,240.58 L1012.5,242.06 L1013.5,243.53 L1014.5,244.93 L1015.5,246.21 L1016.5,247.27 L1017.5,248.04 L1018.5,248.39 L1019.5,248.18 L1020.5,247.42 L1021.5,246.26 L1022.5,244.82 L1023.5,243.14 L1024.5,241.26 L1025.5,239.19 L1026.5,236.88 L1027.5,234.26 L1028.5,231.29 L1029.5,228.04 L1030.5,224.67 L1031.5,221.36 L1032.5,218.28 L1033.5,215.50 L1034.5,213.00 L1035.5,210.72 L1036.5,208.62 L1037.5,206.72 L1038.5,205.06 L1039.5,203.67 L1040.5,202.60 L1041.5,201.88 L1042.5,201.47 L1043.5,201.34 L1044.5,201.51 L1045.5,202.08 L1046.5,203.23 L1047.5,205.08 L1048.5,207.51 L1049.5,209.71" fill="none" stroke="#f3ae5a" stroke-width="1.45" stroke-linejoin="round"/></svg>
<div class="t r" style="left:-36.2px;top:160.2px;color:#8c8c8c;"><span style="display:inline-block;font-size:9.0px;transform:scaleX(0.91);transform-origin:right center;">40,000</span></div>
<div class="t r" style="left:-36.2px;top:199.7px;color:#8c8c8c;"><span style="display:inline-block;font-size:9.0px;transform:scaleX(0.91);transform-origin:right center;">30,000</span></div>
<div class="t r" style="left:-36.2px;top:239.2px;color:#8c8c8c;"><span style="display:inline-block;font-size:9.0px;transform:scaleX(0.91);transform-origin:right center;">20,000</span></div>
<div class="t r" style="left:-36.2px;top:278.7px;color:#8c8c8c;"><span style="display:inline-block;font-size:9.0px;transform:scaleX(0.91);transform-origin:right center;">10,000</span></div>
<div class="t r" style="left:-36.2px;top:318.2px;color:#8c8c8c;"><span style="display:inline-block;font-size:9.0px;transform:scaleX(0.91);transform-origin:right center;">0</span></div>
<div style="position:absolute;left:15px;top:347px;width:1057px;height:1px;background:#e8e8e8;"></div>
<div style="position:absolute;left:15px;top:363.1px;width:2px;height:8.7px;background:#2b9af0;"></div>
<div class="t" style="left:21.1px;top:363.5px;font-weight:bold;color:#3a3a3a;">能耗对比明细</div>
<div style="position:absolute;left:1038px;top:357.3px;width:34px;height:20.6px;background:#1e90f2;border-radius:2px;"></div>
<div class="t c" style="left:955px;top:363px;color:#fff;font-weight:500;">导出</div>
<div style="position:absolute;left:15px;top:386.5px;width:1057px;height:30px;background:#eef3fa;"></div>
<div style="position:absolute;left:15px;top:443.5px;width:1057px;height:26.5px;background:#fafafa;"></div>
<div class="t c" style="left:21px;top:397px;color:#303133;">序号</div>
<div class="t c" style="left:21px;top:425px;color:#6a6b6e;"><span style="display:inline-block;font-size:8.7px;transform:scaleX(0.915);transform-origin:center center;">1</span></div>
<div class="t c" style="left:21px;top:452.5px;color:#6a6b6e;"><span style="display:inline-block;font-size:8.7px;transform:scaleX(0.915);transform-origin:center center;">2</span></div>
<div class="t c" style="left:205.5px;top:397px;color:#303133;">日期</div>
<div class="t c" style="left:205.5px;top:425px;color:#6a6b6e;"><span style="display:inline-block;font-size:8.7px;transform:scaleX(0.915);transform-origin:center center;">2022-01-01~2022-06-30</span></div>
<div class="t c" style="left:205.5px;top:452.5px;color:#6a6b6e;"><span style="display:inline-block;font-size:8.7px;transform:scaleX(0.915);transform-origin:center center;">2023-01-01~2023-06-30</span></div>
<div class="t c" style="left:364px;top:397px;color:#303133;">对象</div>
<div class="t c" style="left:364px;top:425px;color:#6a6b6e;"><span style="display:inline-block;font-size:8.7px;transform:scaleX(0.915);transform-origin:center center;">空调用电</span></div>
<div class="t c" style="left:364px;top:452.5px;color:#6a6b6e;"><span style="display:inline-block;font-size:8.7px;transform:scaleX(0.915);transform-origin:center center;">空调用电</span></div>
<div class="t c" style="left:549.4px;top:397px;color:#303133;">电能耗累计值(kWh)</div>
<div class="t c" style="left:549.4px;top:425px;color:#6a6b6e;"><span style="display:inline-block;font-size:8.7px;transform:scaleX(0.915);transform-origin:center center;">2756167</span></div>
<div class="t c" style="left:549.4px;top:452.5px;color:#6a6b6e;"><span style="display:inline-block;font-size:8.7px;transform:scaleX(0.915);transform-origin:center center;">2436857.71</span></div>
<div class="t c" style="left:708px;top:397px;color:#303133;">平均值(kWh)</div>
<div class="t c" style="left:708px;top:425px;color:#6a6b6e;"><span style="display:inline-block;font-size:8.7px;transform:scaleX(0.915);transform-origin:center center;">15227.44</span></div>
<div class="t c" style="left:708px;top:452.5px;color:#6a6b6e;"><span style="display:inline-block;font-size:8.7px;transform:scaleX(0.915);transform-origin:center center;">13463.3</span></div>
<div class="t c" style="left:813.7px;top:397px;color:#303133;">最大值(kWh)</div>
<div class="t c" style="left:813.7px;top:425px;color:#6a6b6e;"><span style="display:inline-block;font-size:8.7px;transform:scaleX(0.915);transform-origin:center center;">35772.9</span></div>
<div class="t c" style="left:813.7px;top:452.5px;color:#6a6b6e;"><span style="display:inline-block;font-size:8.7px;transform:scaleX(0.915);transform-origin:center center;">31001.5</span></div>
<div class="t c" style="left:919.1px;top:397px;color:#303133;">最小值(kWh)</div>
<div class="t c" style="left:919.1px;top:425px;color:#6a6b6e;"><span style="display:inline-block;font-size:8.7px;transform:scaleX(0.915);transform-origin:center center;">9509</span></div>
<div class="t c" style="left:919.1px;top:452.5px;color:#6a6b6e;"><span style="display:inline-block;font-size:8.7px;transform:scaleX(0.915);transform-origin:center center;">7852.2</span></div>
</body></html>
